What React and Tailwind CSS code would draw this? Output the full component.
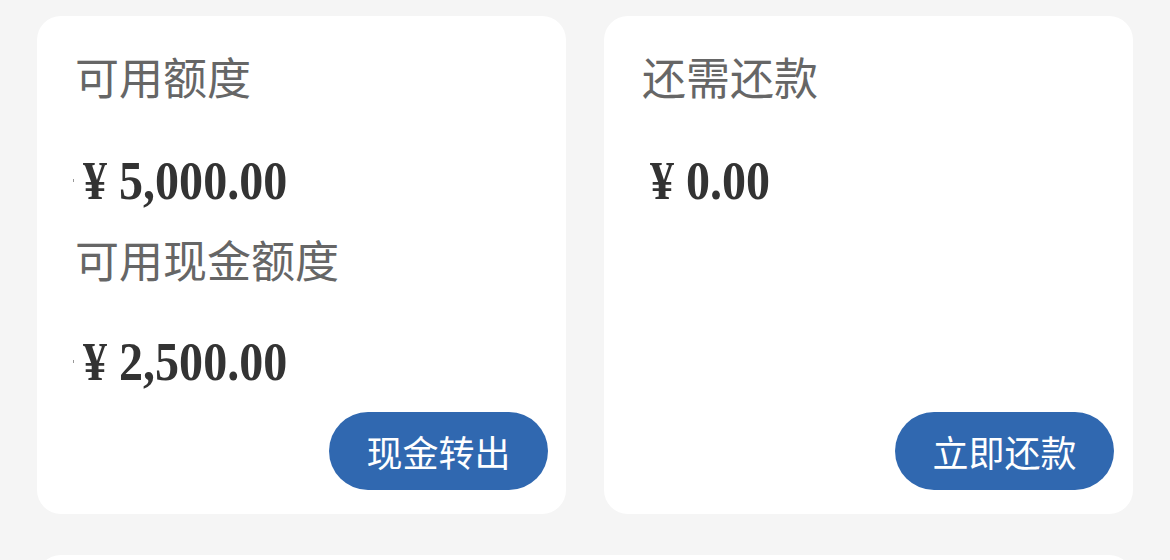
import React from 'react';

const cjk = { fontFamily: '"Noto Sans CJK SC", "Noto Sans", sans-serif' };

function Amount({ value, tick }) {
  return (
    <div className="relative flex h-[60px] items-center pl-2 text-[#333]">
      {tick && <span className="absolute left-[-2px] top-[28px] h-[3px] w-[1px] bg-[#999]" />}
      <span
        className="inline-block origin-left scale-x-[0.89] whitespace-nowrap text-[54px] font-bold leading-none"
        style={{ fontFamily: '"Liberation Serif", "Times New Roman", serif' }}
      >
        ¥ {value}
      </span>
    </div>
  );
}

function Label({ children }) {
  return (
    <div className="h-[44px] text-[44px] leading-[44px] text-[#666]" style={cjk}>
      {children}
    </div>
  );
}

function PillButton({ children }) {
  return (
    <button
      type="button"
      className="mt-auto ml-auto flex h-[78px] w-[219px] items-center justify-center rounded-full bg-[#3068b0] text-[36px] text-white"
      style={cjk}
    >
      {children}
    </button>
  );
}

export default function App() {
  return (
    <div className="min-h-[560px] bg-[#f5f5f5] px-[37px] pt-4">
      <div className="grid grid-cols-2 gap-[38px]">
        <div className="flex h-[498px] flex-col rounded-3xl bg-white pt-[38px] pr-[18px] pb-6 pl-[38px]">
          <Label>可用额度</Label>
          <div className="mt-[53px]">
            <Amount value="5,000.00" tick />
          </div>
          <div className="mt-[26px]">
            <Label>可用现金额度</Label>
          </div>
          <div className="mt-[51px]">
            <Amount value="2,500.00" tick />
          </div>
          <PillButton>现金转出</PillButton>
        </div>
        <div className="flex h-[498px] flex-col rounded-3xl bg-white pt-[38px] pr-[19px] pb-6 pl-[38px]">
          <Label>还需还款</Label>
          <div className="mt-[53px]">
            <Amount value="0.00" />
          </div>
          <PillButton>立即还款</PillButton>
        </div>
      </div>
      <div className="mt-[41px] h-[100px] rounded-3xl bg-white" />
    </div>
  );
}
